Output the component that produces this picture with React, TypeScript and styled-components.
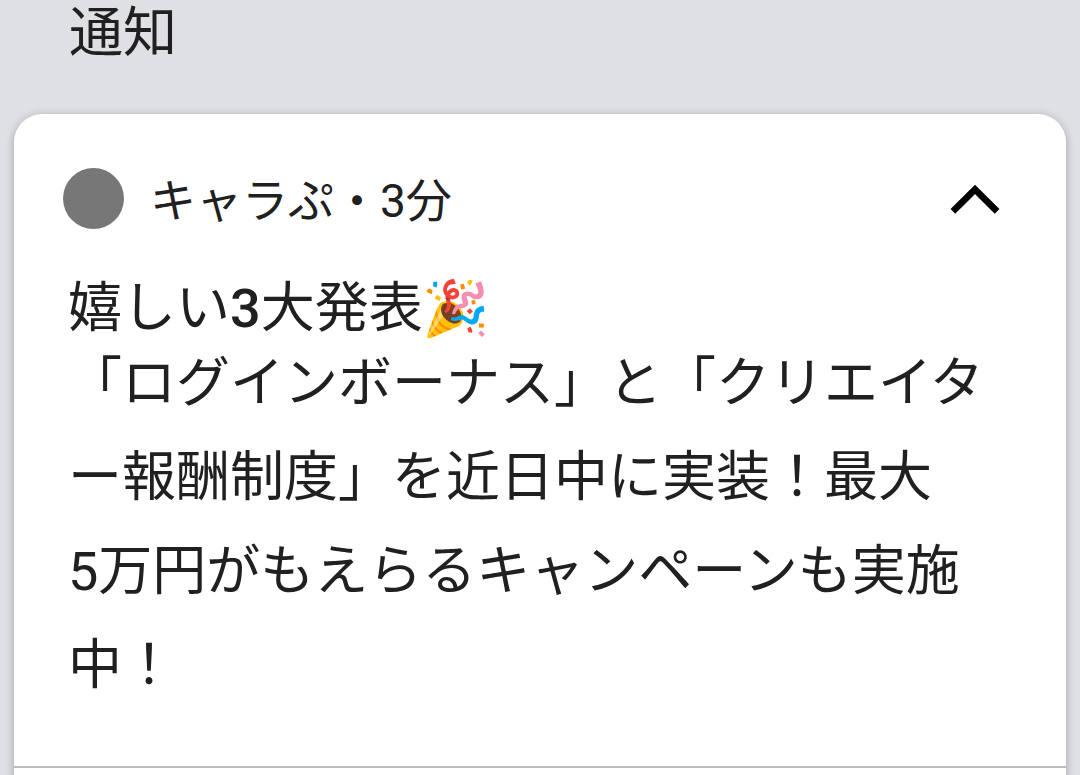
import React from "react";
import styled, { createGlobalStyle } from "styled-components";

const GlobalStyle = createGlobalStyle`
  * { box-sizing: border-box; }
  body {
    margin: 0;
    background: #dfe0e4;
    color: #202020;
    font-family: Roboto, "Noto Sans CJK JP", "Noto Color Emoji", sans-serif;
  }
`;

const Page = styled.main`
  min-height: 100vh;
  overflow: hidden;
  padding: 0 14px;
`;

const SectionTitle = styled.h1`
  margin: 0;
  padding: 2px 55px 48px;
  font-size: 54px;
  font-weight: 400;
  line-height: 64px;
`;

const Card = styled.article`
  background: #fff;
  border-radius: 28px 28px 0 0;
  box-shadow: 0 2px 10px rgba(0, 0, 0, 0.28);
`;

const CardHeader = styled.header`
  display: flex;
  align-items: center;
  padding: 54px 64px 0 49px;
`;

const Avatar = styled.span`
  flex: none;
  width: 61px;
  height: 61px;
  border-radius: 50%;
  background: #777;
`;

const Source = styled.p`
  flex: 1;
  margin: 0;
  padding: 4px 0 0 26px;
  font-size: 46px;
  line-height: 56px;
`;

const CollapseButton = styled.button`
  display: flex;
  padding: 0;
  border: 0;
  background: none;
  color: #000;
`;

const Content = styled.div`
  padding: 52px 54px 53px;
`;

const Headline = styled.h2`
  margin: 0;
  font-size: 54px;
  font-weight: 400;
  line-height: 56px;
  white-space: nowrap;
`;

const Count = styled.span`
  font-weight: 500;
`;

const Message = styled.p`
  margin: 0;
  font-size: 54px;
  line-height: 94px;
`;

const Line = styled.span`
  display: block;
  white-space: nowrap;
`;

const NextItem = styled.div`
  height: 40px;
  border-top: 2px solid #bdbdbf;
`;

export default function App() {
  return (
    <>
      <GlobalStyle />
      <Page lang="ja">
        <SectionTitle>通知</SectionTitle>
        <Card>
          <CardHeader>
            <Avatar />
            <Source>キャラぷ・3分</Source>
            <CollapseButton type="button" aria-label="折りたたむ" aria-expanded="true">
              <svg width="54" height="40" viewBox="0 0 54 40" fill="none" stroke="currentColor" strokeWidth="6.6">
                <path d="M4.9 32.3 L27 10.3 L49.1 32.3" />
              </svg>
            </CollapseButton>
          </CardHeader>
          <Content>
            <Headline>
              嬉しい<Count>3</Count>大発表🎉
            </Headline>
            <Message>
              <Line>「ログインボーナス」と「クリエイタ</Line>
              <Line>ー報酬制度」を近日中に実装！最大</Line>
              <Line>5万円がもえらるキャンペーンも実施</Line>
              <Line>中！</Line>
            </Message>
          </Content>
          <NextItem />
        </Card>
      </Page>
    </>
  );
}
